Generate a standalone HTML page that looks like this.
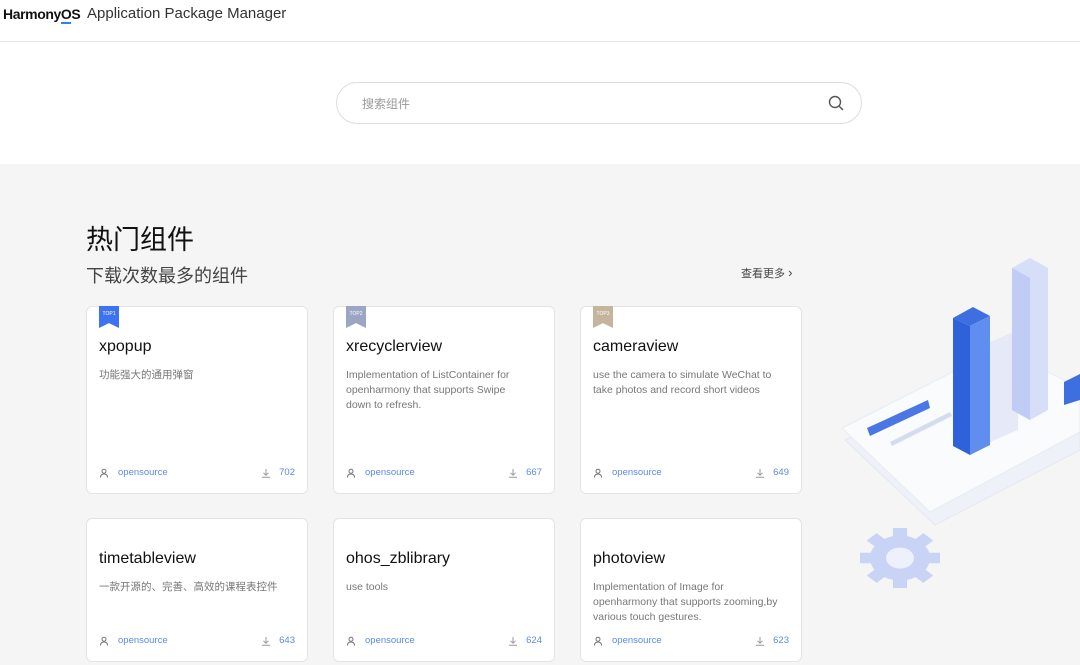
<!DOCTYPE html>
<html><head><meta charset="utf-8"><style>
*{margin:0;padding:0;box-sizing:border-box}
body{width:1080px;height:665px;overflow:hidden;background:#f5f5f5;font-family:"Liberation Sans","Noto Sans CJK SC",sans-serif;position:relative}
.top{position:absolute;left:0;top:0;width:1080px;height:164px;background:#fff}
.hdr{position:absolute;left:0;top:0;width:1080px;height:42px;border-bottom:1px solid #e8e8e8}
.logo{position:absolute;left:3px;top:6px;font-size:14px;font-weight:bold;color:#111;letter-spacing:-0.4px}
.app{position:absolute;left:87px;top:5px;font-size:15px;color:#333}
.search{position:absolute;left:336px;top:82px;width:526px;height:42px;border:1px solid #ddd;border-radius:21px;background:#fff}
.search span{position:absolute;left:25px;top:12px;font-size:12px;color:#999}
h1{position:absolute;left:86px;top:218px;font-size:27px;font-weight:normal;color:#111}
h2{position:absolute;left:86px;top:262px;font-size:18px;font-weight:normal;color:#444}
.more{position:absolute;left:741px;top:265px;font-size:11px;color:#444}
.card{position:absolute;width:222px;background:#fff;border:1px solid #e4e4e4;border-radius:6px}
.tag{position:absolute;left:12px;top:-1px;width:20px;height:22px;clip-path:polygon(0 0,100% 0,100% 100%,50% 78%,0 100%);color:#fff;font-size:5px;text-align:center;padding-top:5px}
.t{position:absolute;left:12px;top:31px;font-size:16px;color:#111}
.d{position:absolute;left:12px;top:61px;width:182px;font-size:10.5px;color:#777;line-height:15px}
.u{position:absolute;left:12px;bottom:15px;font-size:9.5px;color:#5a8ae8;display:flex;align-items:center}
.u svg{margin-right:9px}
.n{position:absolute;right:12px;bottom:15px;font-size:9.5px;color:#5a8ae8;display:flex;align-items:center}
.n svg{margin-right:8px}
</style></head><body>
<svg width="0" height="0" style="position:absolute"><defs>
<symbol id="us" viewBox="0 0 10 10"><circle cx="5" cy="3.2" r="2" fill="none" stroke="#777" stroke-width="1"/><path d="M1.5 9.5 Q1.5 6 5 6 Q8.5 6 8.5 9.5" fill="none" stroke="#777" stroke-width="1"/></symbol>
<symbol id="dl" viewBox="0 0 10 10"><path d="M5 1 V7 M2.5 4.8 L5 7.2 L7.5 4.8 M1 9.3 H9" fill="none" stroke="#999" stroke-width="1"/></symbol>
</defs></svg>
<div class="top"></div>
<div class="hdr"><div class="logo">Harmony<span style="border-bottom:2px solid #3b7cf0">O</span>S</div><div class="app">Application Package Manager</div></div>
<div class="search"><span>搜索组件</span>
<svg style="position:absolute;right:16px;top:12px" width="17" height="17" viewBox="0 0 17 17"><circle cx="7" cy="7" r="5.5" fill="none" stroke="#555" stroke-width="1.4"/><line x1="11" y1="11" x2="15" y2="15" stroke="#555" stroke-width="1.4"/></svg></div>
<h1>热门组件</h1><h2>下载次数最多的组件</h2>
<div class="more">查看更多 <span style="font-size:13px">›</span></div>

<div class="card" style="left:86px;top:306px;height:188px"><div class="tag" style="background:#3d72f0">TOP1</div><div class="t">xpopup</div><div class="d">功能强大的通用弹窗</div><div class="u"><svg width="10" height="10"><use href="#us"/></svg>opensource</div><div class="n"><svg width="10" height="10"><use href="#dl"/></svg>702</div></div>
<div class="card" style="left:333px;top:306px;height:188px"><div class="tag" style="background:#9aa6c4">TOP2</div><div class="t">xrecyclerview</div><div class="d">Implementation of ListContainer for openharmony that supports Swipe down to refresh.</div><div class="u"><svg width="10" height="10"><use href="#us"/></svg>opensource</div><div class="n"><svg width="10" height="10"><use href="#dl"/></svg>667</div></div>
<div class="card" style="left:580px;top:306px;height:188px"><div class="tag" style="background:#c4b59c">TOP3</div><div class="t">cameraview</div><div class="d">use the camera to simulate WeChat to take photos and record short videos</div><div class="u"><svg width="10" height="10"><use href="#us"/></svg>opensource</div><div class="n"><svg width="10" height="10"><use href="#dl"/></svg>649</div></div>
<div class="card" style="left:86px;top:518px;height:144px"><div class="t">timetableview</div><div class="d" style="width:200px">一款开源的、完善、高效的课程表控件</div><div class="u"><svg width="10" height="10"><use href="#us"/></svg>opensource</div><div class="n"><svg width="10" height="10"><use href="#dl"/></svg>643</div></div>
<div class="card" style="left:333px;top:518px;height:144px"><div class="t">ohos_zblibrary</div><div class="d">use tools</div><div class="u"><svg width="10" height="10"><use href="#us"/></svg>opensource</div><div class="n"><svg width="10" height="10"><use href="#dl"/></svg>624</div></div>
<div class="card" style="left:580px;top:518px;height:144px"><div class="t">photoview</div><div class="d" style="width:210px">Implementation of Image for<br>openharmony that supports zooming,by<br>various touch gestures.</div><div class="u"><svg width="10" height="10"><use href="#us"/></svg>opensource</div><div class="n"><svg width="10" height="10"><use href="#dl"/></svg>623</div></div>

<svg style="position:absolute;left:800px;top:250px" width="280" height="350" viewBox="0 0 280 350">
<polygon points="45,190 200,110 280,150 280,200 135,275" fill="#eef2f8" stroke="#e2e8f2"/>
<polygon points="42,178 200,98 280,138 280,182 130,262" fill="#fafbfd" stroke="#e6ebf3"/>
<polygon points="67,178 128,150 130,158 70,186" fill="#4a76e6"/>
<polygon points="90,192 150,162 152,166 92,196" fill="#d4dced"/>
<polygon points="153,68 173,57 190,66 170,76" fill="#3e6fe0"/>
<polygon points="153,68 170,76 170,205 153,196" fill="#2f62da"/>
<polygon points="170,76 190,66 190,195 170,205" fill="#5f8ef0"/>
<polygon points="190,92 218,80 218,180 190,192" fill="#e6eaf8"/>
<polygon points="212,18 230,8 248,18 248,160 230,170 212,160" fill="#d6def8"/>
<polygon points="212,18 230,28 230,170 212,160" fill="#c0ccf4"/>
<polygon points="264,132 280,124 280,150 264,155" fill="#3e6fe0"/>
<g transform="translate(100,308) scale(1,0.75)" fill="#c9d3f6">
<circle r="30"/>
<g><rect x="-7" y="-40" width="14" height="80"/><rect x="-40" y="-7" width="80" height="14"/><rect x="-7" y="-40" width="14" height="80" transform="rotate(45)"/><rect x="-7" y="-40" width="14" height="80" transform="rotate(-45)"/></g>
<circle r="14" fill="#eef1fb"/></g>
</svg>
</body></html>
